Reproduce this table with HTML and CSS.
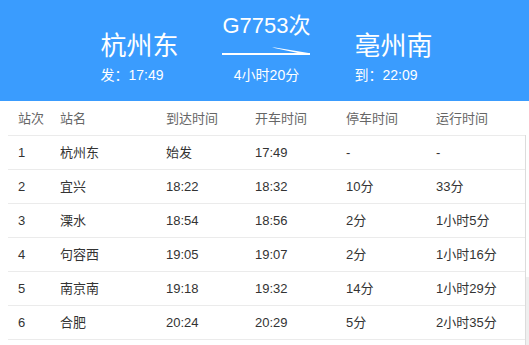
FILE: index.html
```html
<!DOCTYPE html>
<html lang="zh-CN">
<head>
<meta charset="utf-8">
<title>G7753次</title>
<link rel="stylesheet" href="styles.css">
</head>
<body>
<div class="hero">
  <div class="stn">
    <div class="stn-name">杭州东</div>
    <div class="stn-time">发：17:49</div>
  </div>
  <div class="trip">
    <div class="train">G7753次</div>
    <svg class="arrow" width="90" height="10" viewBox="0 0 90 10">
      <rect x="0" y="7" width="88" height="2" fill="#fff"/>
      <polygon points="50,1.5 53,1.5 88,7.2 77,7.2" fill="#fff"/>
    </svg>
    <div class="dur">4小时20分</div>
  </div>
  <div class="stn">
    <div class="stn-name">亳州南</div>
    <div class="stn-time">到：22:09</div>
  </div>
</div>
<div class="main">
  <div class="tbl">
    <div class="row head"><span>站次</span><span>站名</span><span>到达时间</span><span>开车时间</span><span>停车时间</span><span>运行时间</span></div>
    <div class="row"><span>1</span><span>杭州东</span><span>始发</span><span>17:49</span><span>-</span><span>-</span></div>
    <div class="row"><span>2</span><span>宜兴</span><span>18:22</span><span>18:32</span><span>10分</span><span>33分</span></div>
    <div class="row"><span>3</span><span>溧水</span><span>18:54</span><span>18:56</span><span>2分</span><span>1小时5分</span></div>
    <div class="row"><span>4</span><span>句容西</span><span>19:05</span><span>19:07</span><span>2分</span><span>1小时16分</span></div>
    <div class="row"><span>5</span><span>南京南</span><span>19:18</span><span>19:32</span><span>14分</span><span>1小时29分</span></div>
    <div class="row"><span>6</span><span>合肥</span><span>20:24</span><span>20:29</span><span>5分</span><span>2小时35分</span></div>
  </div>
  <div class="rail"><div class="thumb"></div></div>
</div>
</body>
</html>
```
FILE: styles.css
```css
html, body {
  margin: 0;
  padding: 0;
  background: #fff;
}
body {
  font-family: "Liberation Sans", "Noto Sans CJK SC", Arial, sans-serif;
  color: #333;
  width: 529px;
  height: 345px;
  overflow: hidden;
}
.hero {
  height: 101px;
  background: #3a9cfe;
  color: #fff;
  display: flex;
  justify-content: center;
  align-items: flex-start;
  gap: 43px;
  padding-left: 4px;
  box-sizing: border-box;
}
.stn {
  width: 78px;
  padding-top: 31px;
}
.stn-name {
  font-size: 26px;
  line-height: 30px;
  white-space: nowrap;
}
.stn-time {
  margin-top: 5px;
  font-size: 14px;
  line-height: 18px;
  white-space: nowrap;
}
.trip {
  width: 90px;
  padding-top: 13px;
  display: flex;
  flex-direction: column;
  align-items: center;
}
.train {
  font-size: 22px;
  line-height: 26px;
  white-space: nowrap;
}
.arrow {
  display: block;
  margin-top: 7px;
}
.dur {
  margin-top: 10px;
  font-size: 14px;
  line-height: 18px;
  white-space: nowrap;
}
.main {
  display: flex;
  padding-left: 8px;
  height: 244px;
}
.tbl {
  width: 517px;
}
.row {
  display: grid;
  grid-template-columns: 42px 106px 89px 91px 90px 99px;
  height: 33px;
  border-bottom: 1px solid #ebebeb;
  font-size: 13px;
  line-height: 34px;
  color: #333;
}
.row span {
  padding-left: 10px;
  white-space: nowrap;
}
.row.head {
  height: 34px;
  line-height: 35px;
  color: #666;
}
.rail {
  flex: 1;
  margin-top: 34px;
  border-left: 1px solid #dcdcdc;
  background: #efefef;
}
.thumb {
  height: 142px;
  background: #fff;
}
```
